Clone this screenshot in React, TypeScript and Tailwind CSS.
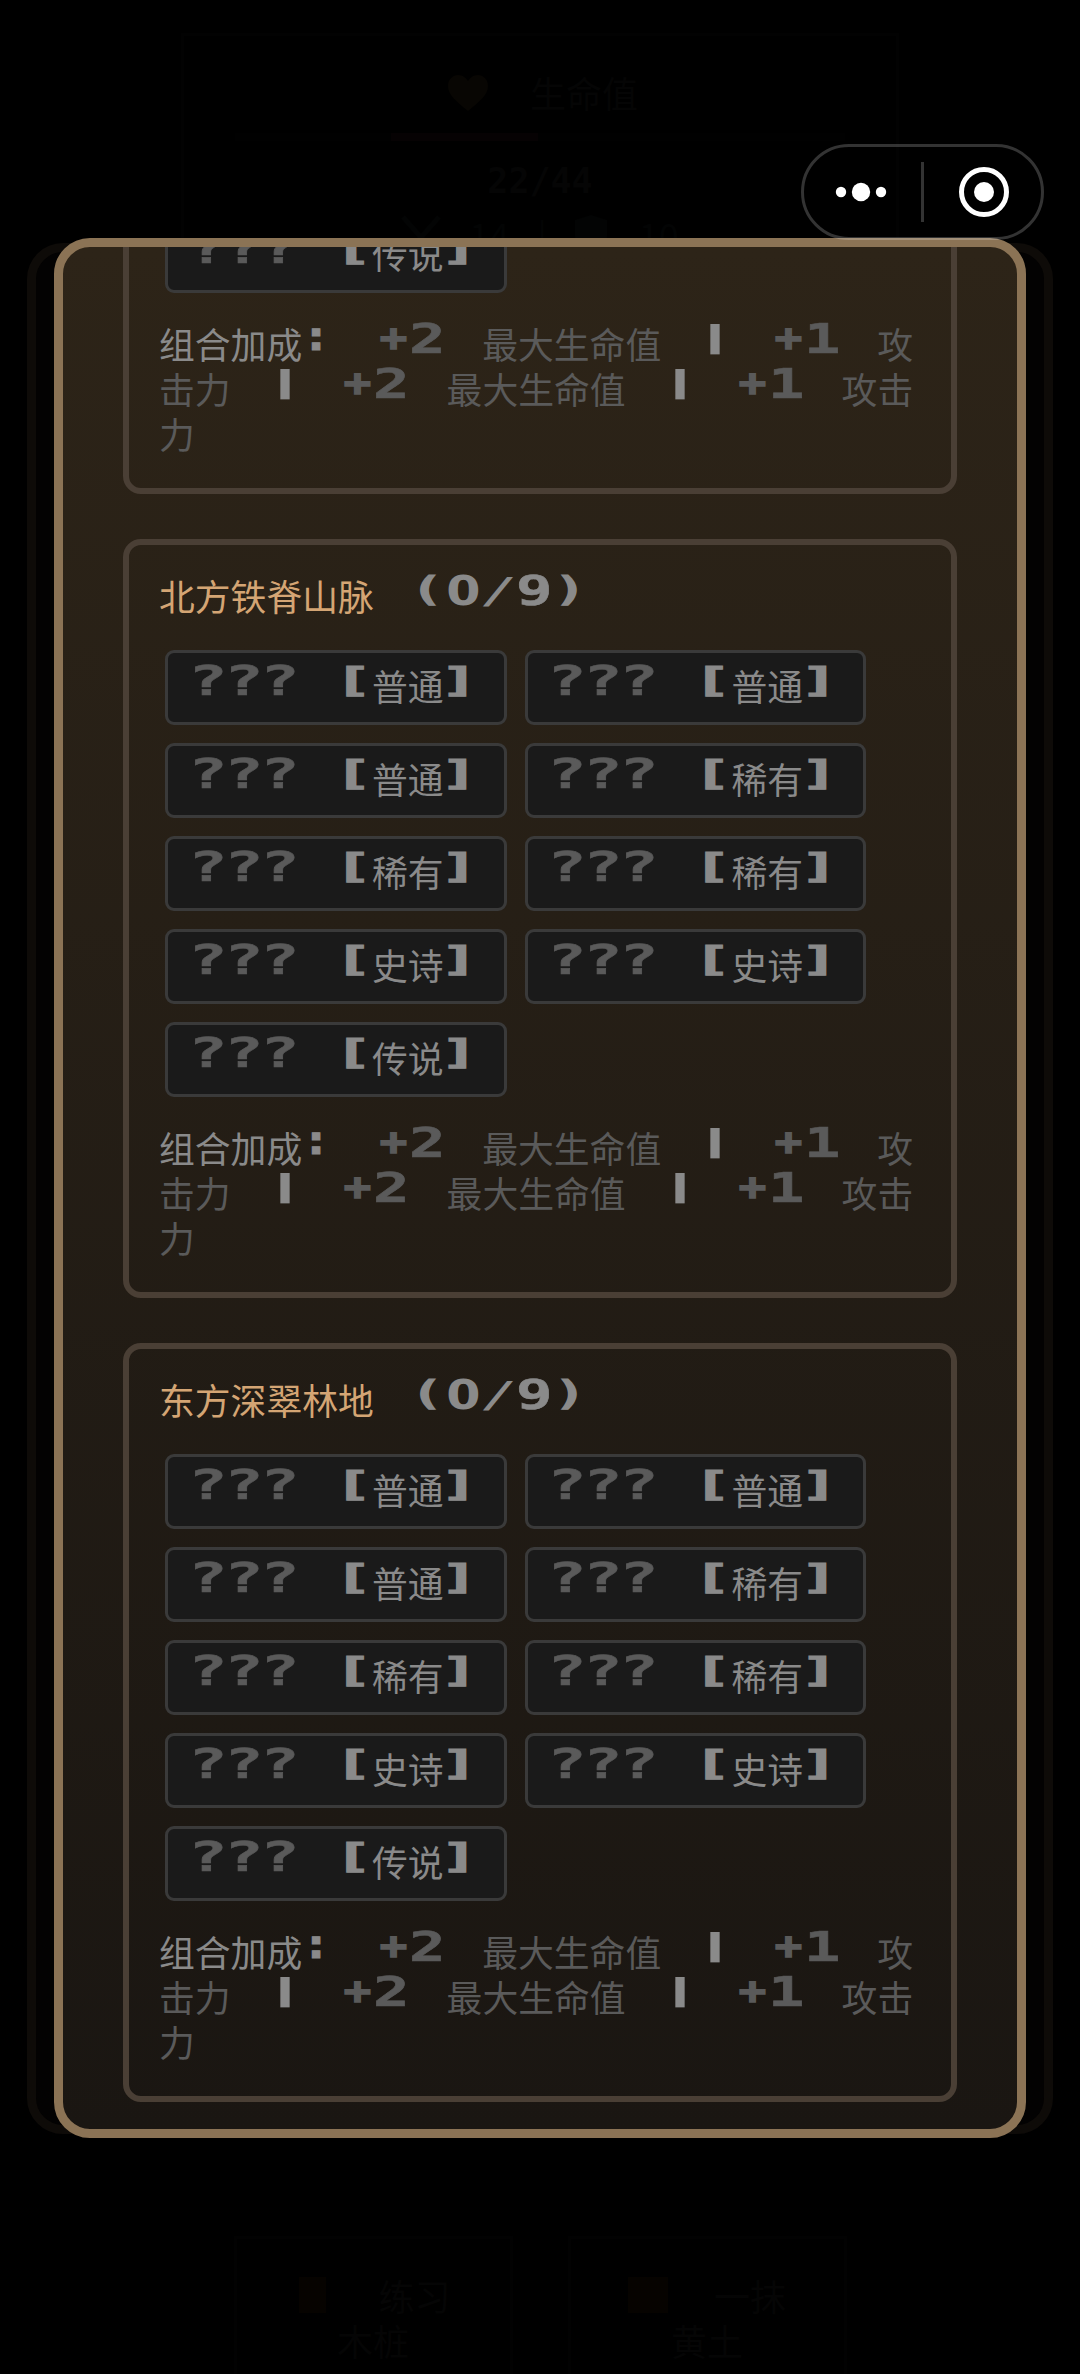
import clsx from 'clsx';

const CJK = "font-['Noto_Sans_CJK_SC',sans-serif]";

type Tone = 'bright' | 'dim';

// 各像素字符的字号、拉伸与偏移
const GLYPHS: Record<string, string> = {
  '?': 'text-[41px] -translate-x-[1.5px] scale-x-[1.6] [-webkit-text-stroke:0.5px]',
  '[': 'text-[34px] -translate-y-0.5 scale-x-[1.9] [-webkit-text-stroke:1px]',
  ']': 'text-[34px] -translate-x-px -translate-y-0.5 scale-x-[1.9] [-webkit-text-stroke:1px]',
  '(': 'text-[33px] -translate-y-0.5 scale-x-[1.6] [-webkit-text-stroke:1px]',
  ')': 'text-[33px] -translate-x-px -translate-y-0.5 scale-x-[1.6] [-webkit-text-stroke:1px]',
  '/': 'text-[36px] -translate-y-px scale-x-[1.75] font-normal',
  '+': 'text-[38px] translate-x-0.5 -translate-y-0.5 scale-x-[1.2] [-webkit-text-stroke:1.5px]',
  '|': 'text-[30px] translate-x-px -translate-y-[3.5px] scale-x-[2.8]',
  ':': 'text-[40px] -translate-x-[3px] -translate-y-1 scale-x-[1.15] [-webkit-text-stroke:1px]',
  '0': "font-['DejaVu_Sans',sans-serif] text-[41px] scale-x-[1.2]",
};

const REGIONS = [
  { name: '北方铁脊山脉', total: 9 },
  { name: '东方深翠林地', total: 9 },
];
const RARITIES = ['普通', '普通', '普通', '稀有', '稀有', '稀有', '史诗', '史诗', '传说'];

/** 等宽像素风文字，每个字符占 36px */
function Pixel({ text, tone }: { text: string; tone: Tone }) {
  return (
    <span
      className={clsx(
        "relative -top-1.5 -left-px flex shrink-0 font-['DejaVu_Sans_Mono',monospace] font-bold",
        tone === 'bright' ? 'text-[#8a8a8a]' : 'text-[#5a5a5a]'
      )}
    >
      {text.split('').map((ch, i) => (
        <span key={i} className="flex h-[45px] w-9 items-center justify-center">
          <span className={clsx('leading-none', GLYPHS[ch] ?? 'text-[41px] scale-x-[1.48] [-webkit-text-stroke:0.5px]')}>
            {ch === ' ' ? '\u00a0' : ch}
          </span>
        </span>
      ))}
    </span>
  );
}

/** 中文文字 */
function Han({ text, className }: { text: string; className: string }) {
  return (
    <span className={clsx('relative -top-0.5 shrink-0 text-[35.8px] leading-[45px]', className)}>{text}</span>
  );
}

function Slot({ rarity }: { rarity: string }) {
  return (
    <div className="flex h-[75px] w-[341.5px] items-center rounded-[9px] border-[3px] border-[#3a3a3a] bg-[#1a1a1a] pl-6">
      <Pixel text="???" tone="dim" />
      <Pixel text=" [" tone="bright" />
      <Han text={rarity} className="text-[#8a8a8a]" />
      <Pixel text="]" tone="bright" />
    </div>
  );
}

function Bonus() {
  return (
    <div className="mt-[30px] flex flex-col">
      <div className="flex h-[45px] items-center">
        <Han text="组合加成" className="text-[#8a8a8a]" />
        <Pixel text=": " tone="bright" />
        <Pixel text="+2 " tone="dim" />
        <Han text="最大生命值" className="text-[#5a5a5a]" />
        <Pixel text=" | " tone="bright" />
        <Pixel text="+1 " tone="dim" />
        <Han text="攻" className="text-[#5a5a5a]" />
      </div>
      <div className="flex h-[45px] items-center">
        <Han text="击力" className="text-[#5a5a5a]" />
        <Pixel text=" | " tone="bright" />
        <Pixel text="+2 " tone="dim" />
        <Han text="最大生命值" className="text-[#5a5a5a]" />
        <Pixel text=" | " tone="bright" />
        <Pixel text="+1 " tone="dim" />
        <Han text="攻击" className="text-[#5a5a5a]" />
      </div>
      <div className="flex h-[45px] items-center">
        <Han text="力" className="text-[#5a5a5a]" />
      </div>
    </div>
  );
}

function RegionCard({ name, total, rarities }: { name?: string; total?: number; rarities: string[] }) {
  return (
    <section className="shrink-0 rounded-[18px] border-[6px] border-[#4a3f35] p-[30px]">
      {name && (
        <div className="mb-[30px] flex h-[45px] items-center">
          <Han text={name} className="text-[#d4a574]" />
          <Pixel text={` (0/${total})`} tone="bright" />
        </div>
      )}
      <div className="ml-1.5 flex flex-wrap gap-[18px]">
        {rarities.map((rarity, i) => (
          <Slot key={i} rarity={rarity} />
        ))}
      </div>
      <Bonus />
    </section>
  );
}

/** 右上角小程序胶囊按钮 */
function Capsule() {
  return (
    <div className="absolute top-36 left-[801px] flex h-24 w-[243px] items-center rounded-full border-[3px] border-white/20">
      <svg className="h-[90px] w-[237px]" viewBox="0 0 237 90" fill="#fff">
        <circle cx="37" cy="45" r="5.2" />
        <circle cx="57" cy="45" r="9.2" />
        <circle cx="77" cy="45" r="5.2" />
        <rect x="117" y="15" width="3" height="60" fill="#333" />
        <circle cx="180" cy="45" r="22.5" fill="none" stroke="#fff" strokeWidth="5" />
        <circle cx="180" cy="45" r="10" />
      </svg>
    </div>
  );
}

/** 遮罩下几乎不可见的游戏页面 */
function Backdrop() {
  return (
    <div className="absolute inset-0 flex flex-col items-center justify-between text-[36px] leading-[45px] text-[#050505]">
      <div className="mt-[33px] flex h-[240px] w-[718px] flex-col items-center border-[3px] border-[#020202] pt-[34px]">
        <div className="flex items-center gap-[42px] pl-1.5">
          <svg className="h-9 w-10" viewBox="0 0 40 36" fill="#080603">
            <path d="M20 36C8 26 0 20 0 11 0 4 5 0 10 0c5 0 8 3 10 6 2-3 5-6 10-6s10 4 10 11c0 9-8 15-20 25z" />
          </svg>
          <span>生命值</span>
        </div>
        <div className="mt-[18px] flex h-2 w-[610px] bg-[#010101] pl-[156px]">
          <div className="w-[147px] bg-[#060203]" />
        </div>
        <span className="mt-[18px] font-['DejaVu_Sans_Mono',monospace] text-[35px] font-bold">22/44</span>
        {/* 攻击与防御 */}
        <div className="mt-2 flex items-center text-[#030404]">
          <svg className="h-10 w-10" viewBox="0 0 40 40" fill="none" stroke="#030404" strokeWidth="5">
            <path d="M2 2l30 34M38 2L8 36" />
          </svg>
          <span className="ml-7">14</span>
          <span className="mx-7">|</span>
          <svg className="h-10 w-8" viewBox="0 0 32 40" fill="#030404">
            <path d="M16 0l16 5v16c0 9-7 15-16 19C7 36 0 30 0 21V5z" />
          </svg>
          <span className="ml-8">10</span>
        </div>
      </div>
      <div className="flex h-[138px] w-[613px] gap-[55px]">
        <div className="flex flex-1 flex-col items-center border-[3px] border-b-0 border-[#020202] pt-[34px]">
          <div className="flex gap-[52px] pl-1">
            <div className="mt-1 h-9 w-[27px] bg-[#060300]" />
            <span>练习</span>
          </div>
          <span>木桩</span>
        </div>
        <div className="flex flex-1 flex-col items-center border-[3px] border-b-0 border-[#020202] pt-[34px]">
          <div className="flex gap-[46px]">
            <div className="mt-1 h-9 w-10 bg-[#060300]" />
            <span>一抹</span>
          </div>
          <span>黄土</span>
        </div>
      </div>
    </div>
  );
}

export default function App() {
  return (
    <div className={clsx('relative h-[2374px] w-[1080px] overflow-hidden bg-black', CJK)}>
      <Backdrop />

      {/* 下层面板的边框 */}
      <div className="absolute top-[243px] left-[27px] h-[1891px] w-[1026px] rounded-[36px] border-[9px] border-[#0e0b08] bg-[#030202]" />

      {/* 图鉴弹窗，已滚动到底部 */}
      <main className="absolute top-[238px] left-[54px] flex h-[1900px] w-[972px] flex-col justify-end gap-[45px] overflow-hidden rounded-[36px] border-[9px] border-[#8b7355] bg-linear-to-b from-[#2d2418] to-[#1a1612] px-[60px] pb-[27px]">
        <RegionCard rarities={RARITIES.slice(-1)} />
        {REGIONS.map((region) => (
          <RegionCard key={region.name} {...region} rarities={RARITIES} />
        ))}
      </main>

      <Capsule />
    </div>
  );
}
